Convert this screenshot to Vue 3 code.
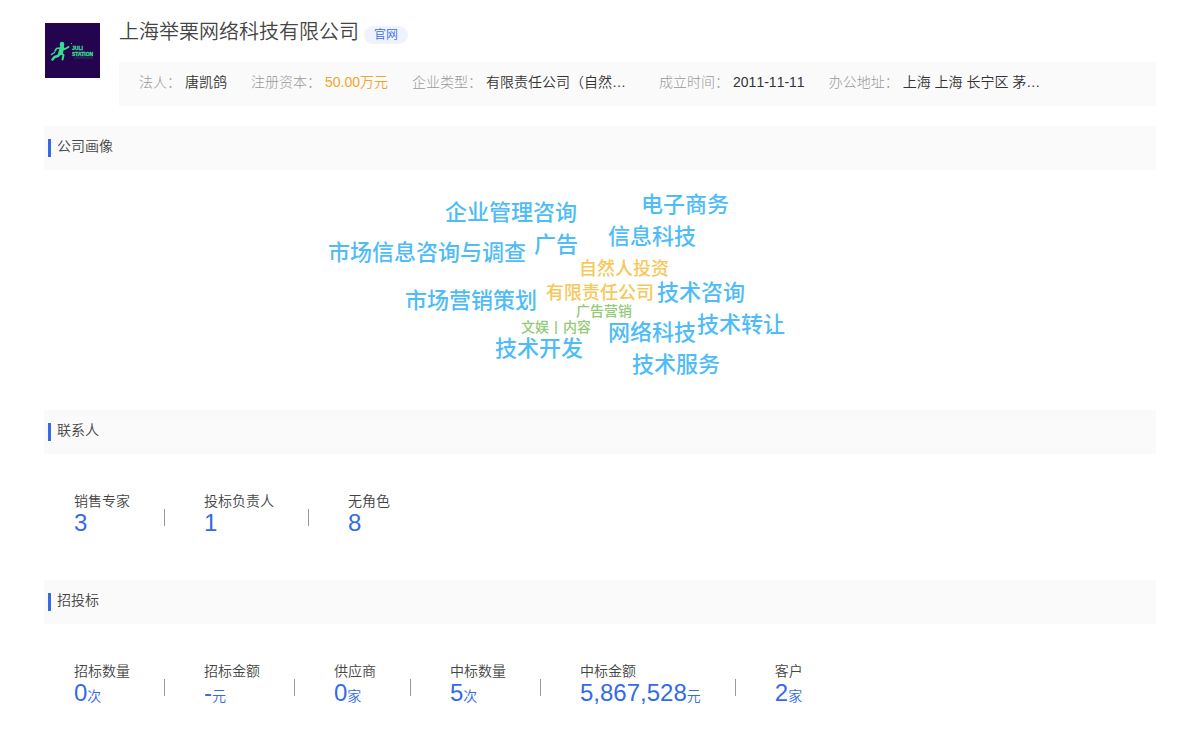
<script setup>
const facts = [
  { label: '法人：', value: '唐凯鸽' },
  { label: '注册资本：', value: '50.00万元', accent: true },
  { label: '企业类型：', value: '有限责任公司（自然…', wide: true },
  { label: '成立时间：', value: '2011-11-11' },
  { label: '办公地址：', value: '上海 上海 长宁区 茅…', wide: true },
]

// x is measured from the middle of the cloud, y from its top; both give the word's centre.
const words = [
  { text: '企业管理咨询', x: -89, y: 43, size: 'large' },
  { text: '电子商务', x: 85, y: 35, size: 'large' },
  { text: '广告', x: -44, y: 75, size: 'large' },
  { text: '信息科技', x: 52, y: 67, size: 'large' },
  { text: '市场信息咨询与调查', x: -173, y: 83, size: 'large' },
  { text: '自然人投资', x: 24, y: 99, size: 'medium' },
  { text: '市场营销策划', x: -129, y: 131, size: 'large' },
  { text: '有限责任公司', x: 0, y: 123, size: 'medium' },
  { text: '技术咨询', x: 101, y: 123, size: 'large' },
  { text: '广告营销', x: 4, y: 141, size: 'small' },
  { text: '文娱丨内容', x: -44, y: 157, size: 'small' },
  { text: '网络科技', x: 52, y: 163, size: 'large' },
  { text: '技术转让', x: 141, y: 155, size: 'large' },
  { text: '技术开发', x: -61, y: 179, size: 'large' },
  { text: '技术服务', x: 76, y: 195, size: 'large' },
]

const groups = [
  {
    title: '联系人',
    stats: [
      { label: '销售专家', value: '3' },
      { label: '投标负责人', value: '1' },
      { label: '无角色', value: '8' },
    ],
  },
  {
    title: '招投标',
    stats: [
      { label: '招标数量', value: '0', unit: '次' },
      { label: '招标金额', value: '-', unit: '元' },
      { label: '供应商', value: '0', unit: '家' },
      { label: '中标数量', value: '5', unit: '次' },
      { label: '中标金额', value: '5,867,528', unit: '元' },
      { label: '客户', value: '2', unit: '家' },
    ],
  },
]
</script>

<template>
  <main class="page">
    <header class="company">
      <svg class="logo" viewBox="0 0 55 55" role="img" aria-label="JULI STATION">
        <rect width="55" height="55" fill="#25044f" />
        <g fill="none" stroke="#35dd91" stroke-linecap="round" stroke-linejoin="round">
          <path d="M17 21v1" stroke-width="4.500" />
          <path d="M17 25l-1.500 5" stroke-width="4.500" />
          <path d="M17 25.500l3 .5 3.500-2" stroke-width="2" />
          <path d="M15 25l-3.500.500-1.500 2.500" stroke-width="1.500" />
          <path d="M15 30l-2 3-3.500 1-2 2.500" stroke-width="2.500" />
          <path d="M16 30l2.500 2-1 4.500" stroke-width="2" />
          <path d="M9.500 29.500l-3 2" stroke-width="1.500" />
          <path d="M26.500 20.500h.1" stroke-width="1" />
        </g>
        <g class="logo-text">
          <text x="27" y="27">JULI</text>
          <text x="27" y="33">STATION</text>
        </g>
        <path d="M29 35h19" stroke="#28725f" stroke-width=".5" />
      </svg>
      <div class="company-main">
        <div class="title-row">
          <h1>上海举栗网络科技有限公司</h1>
          <a class="site" href="#">官网</a>
        </div>
        <dl class="facts">
          <div v-for="f in facts" :key="f.label" class="fact">
            <dt>{{ f.label }}</dt>
            <dd :class="{ accent: f.accent, wide: f.wide }">{{ f.value }}</dd>
          </div>
        </dl>
      </div>
    </header>

    <section>
      <h2>公司画像</h2>
      <div class="cloud">
        <span
          v-for="w in words"
          :key="w.text"
          class="word"
          :class="w.size"
          :style="{ left: `calc(50% + ${w.x}px)`, top: `${w.y}px` }"
        >{{ w.text }}</span>
      </div>
    </section>

    <section v-for="g in groups" :key="g.title">
      <h2>{{ g.title }}</h2>
      <ul class="stats">
        <li v-for="s in g.stats" :key="s.label" class="stat">
          <div>
            <div class="stat-label">{{ s.label }}</div>
            <div class="stat-value">{{ s.value }}<small v-if="s.unit">{{ s.unit }}</small></div>
          </div>
        </li>
      </ul>
    </section>
  </main>
</template>

<style>
body {
  margin: 0;
  background: #fff;
}
</style>

<style scoped>
.page {
  padding: 18px 44px 0;
  color: #444;
  font: 350 14px/20px "Liberation Sans", "Noto Sans CJK SC", sans-serif;
  font-kerning: none;
}
.company {
  display: flex;
  gap: 19px;
  margin-bottom: 20px;
}
.logo {
  flex: none;
  width: 55px;
  height: 55px;
  margin: 5px 0 0 1px;
}
.logo-text {
  fill: #35dd91;
  stroke: #35dd91;
  stroke-width: 0.3px;
  font: bold 5px "Liberation Sans", sans-serif;
}
.company-main {
  flex: 1;
  min-width: 0;
}
.title-row {
  display: flex;
  align-items: flex-start;
  gap: 5px;
  height: 44px;
}
h1 {
  margin: 0;
  font-size: 20px;
  font-weight: 350;
  line-height: 28px;
}
.site {
  margin-top: 8px;
  padding: 0 10px;
  border-radius: 9px;
  background: #eef3fd;
  color: #3f6ce8;
  font-size: 12px;
  line-height: 18px;
  text-decoration: none;
}
.facts {
  display: flex;
  gap: 24px;
  margin: 0;
  padding: 10px 20px 14px;
  background: #fafafa;
}
.fact {
  display: flex;
  gap: 4px;
  white-space: nowrap;
}
dt {
  color: #999;
  font-weight: 300;
}
dd {
  margin: 0;
  color: #333;
}
dd.accent {
  color: #f0a52c;
}
dd.wide {
  min-width: 149px;
}
h2 {
  display: flex;
  gap: 6px;
  margin: 0;
  padding: 10px 4px 13px;
  background: #fafafa;
  font-size: 14px;
  font-weight: 350;
  line-height: 20px;
}
h2::before {
  content: "";
  width: 3px;
  height: 18px;
  margin-top: 3px;
  background: #356ae6;
}
.cloud {
  position: relative;
  height: 240px;
}
.word {
  position: absolute;
  transform: translate(-50%, -50%);
  white-space: nowrap;
  font-weight: 500;
}
.large {
  color: #4fbcf8;
  font-size: 22px;
}
.medium {
  color: #f5c85c;
  font-size: 18px;
}
.small {
  color: #93cb78;
  font-size: 14px;
}
.stats {
  display: flex;
  margin: 0;
  padding: 37px 30px 45px;
  list-style: none;
}
.stat {
  display: flex;
}
.stat + .stat::before {
  content: "";
  width: 1px;
  height: 17px;
  margin: 18px 39px 0 34px;
  background: #999;
}
.stat-label {
  line-height: 20px;
}
.stat-value {
  color: #356ae6;
  font-size: 24px;
  line-height: 24px;
}
.stat-value small {
  font-size: 14px;
  line-height: 20px;
}
</style>
